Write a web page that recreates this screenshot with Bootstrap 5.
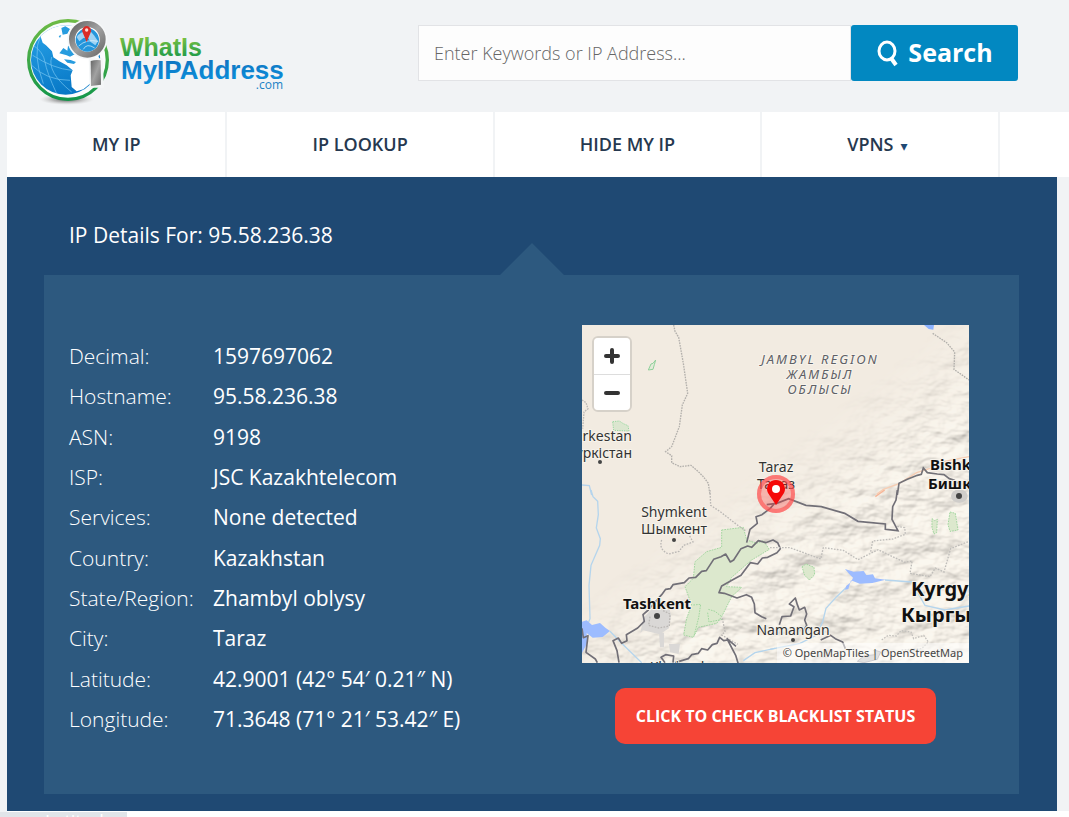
<!DOCTYPE html>
<html lang="en">
<head>
<meta charset="utf-8">
<meta name="viewport" content="width=device-width, initial-scale=1">
<title>IP Details For: 95.58.236.38</title>
<link href="https://cdn.jsdelivr.net/npm/bootstrap@5.3.0/dist/css/bootstrap.min.css" rel="stylesheet">
<style>
  body { font-family: "Open Sans", "Noto Sans", sans-serif; background: #f1f3f5; overflow-x: hidden; min-height: 100vh; }
  .site-header { height: 112px; padding: 12px 51px 0 20px; }
  .search-form { width: 600px; margin-top: 13px; }
  .search-form .form-control { height: 56px; border: 1px solid #e2e3e6; border-radius: 0; background: #fdfdfd; padding: 0 15px; font-size: 18px; font-weight: 300; color: #444; }
  .search-form .form-control::placeholder { color: #666; opacity: 1; }
  .btn-search { width: 167px; height: 56px; background: #0288c1; color: #fff; border: 0; border-radius: 3px; font-size: 25px; font-weight: 700; padding: 0; }
  .btn-search:hover { background: #0277a9; color: #fff; }
  .site-nav { margin-left: 7px; background: #fff; height: 65px; overflow: hidden; }
  .site-nav .nav-link { padding: 0 85px; height: 65px; line-height: 65px; font-size: 18px; font-weight: 600; color: #26384f; border-right: 2px solid #f1f3f5; white-space: nowrap; }
  .site-nav .nav-link:last-child { padding-right: 91px; }
  .caret-mark { font-family: "DejaVu Sans", sans-serif; font-size: 14px; color: #1f4973; margin-left: 7px; }
  .details { margin: 0 12px 0 7px; background: #1f4973; color: #fff; padding: 0 38px 17px 37px; }
  .details h1 { font-size: 21px; font-weight: 400; line-height: 30px; margin: 0; padding: 43px 25px 25px; }
  .panel { position: relative; background: #2d597f; padding: 50px 50px 50px 25px; }
  .panel::before { content: ""; position: absolute; left: 50%; bottom: 100%; margin-left: -32px; border: 32px solid transparent; border-top: 0; border-bottom-color: #2d597f; }
  .facts { display: grid; grid-template-columns: 144px 1fr; grid-auto-rows: 1fr; height: 403px; margin: 11px 0 0; align-items: center; font-size: 21px; line-height: 30px; white-space: nowrap; }
  .facts dt { font-weight: 300; }
  .facts dd { font-weight: 400; margin: 0; }
  .map-col { width: 387px; }
  .map-box { position: relative; overflow: hidden; background: #f2ebe1; }
  .map-box > svg { display: block; width: 100%; }
  .map-zoom { position: absolute; left: 10px; top: 11px; width: 40px; border: 2px solid #d6d1c9; border-radius: 6px; overflow: hidden; }
  .map-zoom button { display: block; width: 100%; height: 36px; border: 0; background: #fff; padding: 0; }
  .map-zoom button + button { border-top: 1px solid #ddd; }
  .map-zoom svg { display: block; margin: auto; }
  .map-credit { position: absolute; right: 0; bottom: 0; background: rgba(255,255,255,.5); font-family: "Noto Sans", sans-serif; font-size: 11px; line-height: 20px; padding: 0 6px; color: #444; white-space: nowrap; }
  .map-credit a { color: #444; text-decoration: none; }
  .btn-status { background: #f64436; color: #fff; border: 0; border-radius: 10px; width: 321px; height: 56px; font-size: 16px; font-weight: 700; margin-top: 25px; }
  .btn-status:hover { background: #dd3a2d; color: #fff; }
  .below { background: #fff; margin-left: 7px; min-height: 6px; }
  .link-status { position: fixed; left: 0; bottom: 0; width: 127px; height: 5px; overflow: hidden; background: #e1e5e9; color: #fff; font-size: 18px; line-height: 18px; padding-left: 45px; white-space: nowrap; }
</style>
</head>
<body>
<header class="site-header d-flex justify-content-between align-items-start">
  <a href="#" aria-label="WhatIsMyIPAddress.com">
    <svg class="d-block" width="270" height="98" viewBox="0 0 270 98">
      <defs>
        <linearGradient id="ring" x1="0" y1="0" x2="0" y2="1"><stop offset="0" stop-color="#6dbb46"/><stop offset="1" stop-color="#12964a"/></linearGradient>
        <linearGradient id="green" x1="0" y1="0" x2="0" y2="1"><stop offset="0.15" stop-color="#7cc242"/><stop offset="0.9" stop-color="#18984a"/></linearGradient>
        <linearGradient id="blue" x1="0" y1="0" x2="0" y2="1"><stop offset="0.1" stop-color="#1173bf"/><stop offset="0.9" stop-color="#0a90dc"/></linearGradient>
        <linearGradient id="sea" x1="0" y1="0" x2="0.3" y2="1"><stop offset="0" stop-color="#2aa5ea"/><stop offset="1" stop-color="#0878c6"/></linearGradient>
        <linearGradient id="steel" x1="0" y1="0" x2="1" y2="1"><stop offset="0" stop-color="#666"/><stop offset="0.5" stop-color="#a2a2a2"/><stop offset="1" stop-color="#6c6c6c"/></linearGradient>
        <radialGradient id="shade"><stop offset="0" stop-color="#555"/><stop offset="0.5" stop-color="#999" stop-opacity=".7"/><stop offset="1" stop-color="#ccc" stop-opacity="0"/></radialGradient>
        <clipPath id="ball"><circle cx="137" cy="144" r="104"/></clipPath>
      </defs>
      <g transform="scale(.33333)">
        <ellipse cx="140" cy="262" rx="82" ry="17" fill="url(#shade)"/>
        <circle cx="144" cy="144" r="118" fill="#fafcfd" stroke="url(#ring)" stroke-width="10"/>
        <g clip-path="url(#ball)">
          <rect x="30" y="30" width="220" height="225" fill="url(#sea)"/>
          <path d="M60 68L95 42 150 36 210 60 238 140 240 210 210 215 190 232 170 238 155 225 152 190 158 175 140 160 118 148 100 136 96 118 78 100 68 92Z" fill="#fff"/>
          <path d="M124 48l12-5 14 8-8 14-14 3zM116 72l8-3-4 9zM118 124l12-16 12 8 2-14 10-2 8 14 8 10-20 10-10-4zM132 142l20 2 16 6-6 6-20-4zM145 30l30 3-14 10zM210 220l20-10-26 42-34 4 20-22z" fill="#279cdf"/>
          <path d="M40 100Q70 120 75 150T110 245M35 160Q80 205 150 205M62 70Q36 125 70 215M95 135Q80 180 155 240M38 130Q100 170 155 175" fill="none" stroke="#7cc8f3" stroke-width="2"/>
        </g>
        <circle cx="202" cy="82" r="60" fill="#f6f8f9"/>
        <circle cx="202" cy="82" r="46" fill="#fff" stroke="url(#steel)" stroke-width="18"/>
        <circle cx="202" cy="84" r="35" fill="#2496dc"/>
        <path d="M170 76Q180 56 210 56L222 70 234 88 226 100 212 90 204 78 190 78 178 88Z" fill="#9fd3f3"/>
        <path d="M176 102Q200 80 234 88M190 112Q200 92 224 108" stroke="#e8f6fd" stroke-width="2" fill="none"/>
        <path d="M200 90L189 64A13 14 0 1 1 211 64Z" fill="#db2b27"/><circle cx="200" cy="54" r="5" fill="#ffd9d3"/>
        <path d="M206 139h42l4 88h-43z" fill="#f4f6f7"/>
        <path d="M212 147Q228 142 242 145L243 218 213 222Z" fill="url(#steel)"/>
      </g>
      <g font-family="'Liberation Sans', sans-serif" font-weight="700">
        <text x="100" y="44" font-size="25" fill="url(#green)">WhatIs</text>
        <text x="101" y="67" font-size="26" fill="url(#blue)">MyIPAddress</text>
      </g>
      <text x="263" y="77" text-anchor="end" font-family="'Open Sans', sans-serif" font-size="12" fill="#1b82c6">.com</text>
    </svg>
  </a>
  <form class="search-form d-flex" role="search">
    <label class="visually-hidden" for="q">Search</label>
    <input id="q" class="form-control flex-grow-1" type="text" placeholder="Enter Keywords or IP Address...">
    <button class="btn btn-search flex-shrink-0 d-flex align-items-center justify-content-center" type="button">
      <svg class="me-2" width="24" height="28" viewBox="0 0 24 28" fill="none" stroke="#fff" aria-hidden="true"><ellipse cx="11" cy="12" rx="8" ry="9" stroke-width="3"/><path d="M15 19l5 7" stroke-width="4"/></svg>Search
    </button>
  </form>
</header>

<nav class="site-nav">
  <div class="nav flex-nowrap">
    <a class="nav-link" href="#">MY IP</a>
    <a class="nav-link" href="#">IP LOOKUP</a>
    <a class="nav-link" href="#">HIDE MY IP</a>
    <a class="nav-link" href="#">VPNS<span class="caret-mark">▾</span></a>
  </div>
</nav>

<main class="details">
  <h1>IP Details For: 95.58.236.38</h1>
  <section class="panel d-flex justify-content-between align-items-start">
    <dl class="facts">
      <dt>Decimal:</dt><dd>1597697062</dd>
      <dt>Hostname:</dt><dd>95.58.236.38</dd>
      <dt>ASN:</dt><dd>9198</dd>
      <dt>ISP:</dt><dd>JSC Kazakhtelecom</dd>
      <dt>Services:</dt><dd>None detected</dd>
      <dt>Country:</dt><dd>Kazakhstan</dd>
      <dt>State/Region:</dt><dd>Zhambyl oblysy</dd>
      <dt>City:</dt><dd>Taraz</dd>
      <dt>Latitude:</dt><dd>42.9001 (42° 54′ 0.21″ N)</dd>
      <dt>Longitude:</dt><dd>71.3648 (71° 21′ 53.42″ E)</dd>
    </dl>
    <div class="map-col text-center">
      <div class="map-box">
        <svg viewBox="0 0 387 338" role="img" aria-label="Map of the area around Taraz">
          <defs>
            <filter id="relief" x="0" y="0" width="100%" height="100%">
              <feTurbulence type="fractalNoise" baseFrequency="0.025 0.04" numOctaves="4" seed="8"/>
              <feDiffuseLighting surfaceScale="7" diffuseConstant="1.16" lighting-color="#f5f2ea"><feDistantLight azimuth="235" elevation="60"/></feDiffuseLighting>
            </filter>
            <linearGradient id="fade" gradientUnits="userSpaceOnUse" x1="150" y1="130" x2="250" y2="260"><stop offset="0.15" stop-color="#000"/><stop offset="0.75" stop-color="#999"/></linearGradient>
            <mask id="hills"><rect width="387" height="338" fill="url(#fade)"/></mask>
          </defs>
          <rect width="387" height="338" fill="#f2ebe1"/>
          <g mask="url(#hills)"><rect width="387" height="338" filter="url(#relief)"/></g>

          <!-- north-west -->
          <g transform="translate(-7 -5) scale(.33333)" fill="none">
            <path d="M296 15L300 34 311 52 325 130 338 220 322 255 313 320 290 380 272 395 290 407 290 428 315 440 348 436 370 455 385 470 400 490 405 525" stroke="#b3b0ac" stroke-width="4" stroke-dasharray="5 3"/>
            <path d="M21 240l12 8 6 18-12 10-4 50" stroke="#bbb8b4" stroke-width="4" stroke-dasharray="5 3"/>
            <path d="M242 120l-8 10-6 2-8 18 14-2 4-14z" stroke="#8fd09a" stroke-width="3" fill="#e3ead8"/>
            <path d="M113 305l20-2 12 8 14 6 3 16-46-2z" stroke="#9ad8a2" stroke-width="3" fill="#dbe6cf" stroke-dasharray="4 3"/>
            <path d="M21 495l22 2 7 28" stroke="#b5d3ec" stroke-width="4"/>
          </g>
          <!-- north-east -->
          <g transform="translate(188 -5) scale(.33333)" fill="none">
            <path d="M462 15h30l-2 14-14-2z" fill="#8cb2ff"/>
            <path d="M488 40L530 68 554 96 552 148 597 180" stroke="#b0aeaa" stroke-width="4" stroke-dasharray="5 3"/>
            <path d="M320 522L340 508 385 492 440 458 480 445 520 425 597 410" stroke="#f7cdb2" stroke-width="4"/>
            <path d="M382 525l5-35 25-12 30-12 12-3 6-19 12 14 30 4 20 2 16 12 15 5 14 10 6 18" stroke="#737278" stroke-width="5"/>
          </g>
          <!-- south-west -->
          <g transform="translate(-7 165) scale(.33333)" fill="none">
            <path d="M440 120L505 112 515 150 545 160 565 152 583 178 530 210 495 240 470 262 455 290 500 292 470 320 440 380 425 400 370 412 355 442 326 435 335 385 350 345 330 290 355 265 360 215 395 185 440 172Z" fill="#dce8cd" stroke="#a3d6a0" stroke-width="3" stroke-dasharray="5 3"/>
            <path d="M355 345l22-2-6 40-14 55M400 358l20 6 20 16M398 368l4 28 40-8" stroke="#a3d6a0" stroke-width="3" stroke-dasharray="5 3"/>
            <path d="M48 0l6 20 14 14 2 40-6 40 12 32-2 20-26 60-6 60 3 100-8 20" stroke="#b5d5ed" stroke-width="4"/>
            <path d="M21 395l14-4 16 14 24-6 16 14 14 10-22 18-30 2-18-14 2 30-16 30z" fill="#9dbcff"/>
            <path d="M105 424L140 460 200 518M505 512L540 488 600 475" stroke="#b5d5ed" stroke-width="4"/>
            <path d="M205 385l25-28 30-22 20 2 8 40-6 38-28 18-50-12-8 8zM252 428h15v44h-12zM282 462h33l-4 30-26-5z" fill="#dad8d6"/>
            <path d="M260 150q-10 30 22 42l30-8 14-18 28-10-10-18M225 380l-4 26 30 8 32-6 2-36-24-12M405 0l2 46 30 20 46 36 28 20M442 385l8 40-10 10 48 28" stroke="#bbb8b5" stroke-width="4" stroke-dasharray="5 4"/>
            <path d="M21 415l4 28 14-6-6 50 28 20 6 11M132 518l-6-36-12-30 16-8 10 16 16-8-2-18 34-20 20-20-4-20 16-14 40-46 12-16 14-2 8-12 34-6 14-14 20-2 18-18 14-2 22-34 22-8 14-8 14 24 10-6 22-34 20-8 12 4 20-20 22 6 22-8 14 8 8 18-10 12-28 14-16 2-14 18-22-4-28 38-22 12-36 20-8 20 16 2 38 14 28-10 16 8 8 20 2 26 20 12 14 6M515 158l10-40 22-18-4-20 18-6 24-18 12-14M300 518l40-12 10-12 20-4 10-14 18 4 14-16 14-4 8-18 12 10 12-2 24 46 8 26M270 518l-12-16 14-8 24 4-2 20M455 445l28 24" stroke="#716f77" stroke-width="5" stroke-linejoin="round"/>
          </g>
          <!-- south-east -->
          <g transform="translate(188 165) scale(.33333)" fill="none">
            <path d="M382 0l-4 30-10 20-2 38 18 34-38-4v-16l-82-8-40-24-70-20-46-4-52-20-36 14-30 4" stroke="#716f77" stroke-width="5"/>
            <path d="M0 173h60l92 34 8-34 60 8 44 28 60-30 80 38 22-4M302 185l6-32 60-6 38-14-2-20-24-4M426 215l-6 35 60 10 16-26 26 12 20-70 55-22" stroke="#bfbdba" stroke-width="4" stroke-dasharray="5 4"/>
            <path d="M316 20l28-20" stroke="#f7b596" stroke-width="4"/>
            <path d="M486 86l8 6 8-4-2 40-8 4-6-20zM540 66l16 4 8 50-24 4-6-20zM96 230l12-8 24 10 2 22-16 16-14-14z" fill="#dce8cd" stroke="#a3d6a0" stroke-width="3" stroke-dasharray="5 3"/>
            <path d="M228 293L200 320 168 355 158 395 140 435 90 460 0 478M345 270l80 6 40 70 60 14 72-12" stroke="#b5d5ed" stroke-width="4"/>
            <path d="M225 237l26 8 30-2 8 12 20-2 6 12 32 4-40 10-38 2-26-10-8 26-10 2 4-12 14-10 6-14-12-12z" fill="#9dbcff"/>
            <path d="M28 404l8-24 26-2 10-28-14-8 18-18 6 20 6 16 16-8 6 20-6 18 6 16-12 20M152 450l30-14 14 10 22 10 8 20" stroke="#716f77" stroke-width="5" stroke-linejoin="round"/>
            <path d="M335 450l20-14 24 2 14-16 30 4 8 20 30-10 14 20-20 20-60 4" stroke="#c4c2be" stroke-width="4" stroke-dasharray="5 4"/>
            <path d="M262 514l20-16 34-4-4-14 20 6-10 22-40 10z" fill="#c5c3c0" stroke="#9a98a0" stroke-width="3"/>
            <ellipse cx="568" cy="18" rx="25" ry="20" fill="#cfcdca"/>
          </g>

          <g fill="#444"><circle cx="18" cy="137" r="2"/><circle cx="92" cy="215" r="2"/><circle cx="75" cy="291" r="3"/><circle cx="377" cy="171" r="3"/><circle cx="211" cy="315" r="2"/></g>
          <g font-family="'Noto Sans', sans-serif" fill="#333" stroke="#f7f3eb" stroke-width="2" paint-order="stroke" font-size="14">
            <g font-style="italic" font-size="13" letter-spacing="2" text-anchor="middle" fill="#5e6066">
              <text x="238" y="39">JAMBYL REGION</text><text x="238" y="54">ЖАМБЫЛ</text><text x="238" y="69">ОБЛЫСЫ</text>
            </g>
            <text x="50" y="116" text-anchor="end">Turkestan</text><text x="50" y="133" text-anchor="end">Түркістан</text>
            <g text-anchor="middle">
              <text x="194" y="147">Taraz</text><text x="194" y="164">Тараз</text>
              <text x="92" y="192">Shymkent</text><text x="92" y="209">Шымкент</text>
              <text x="211" y="310">Namangan</text><text x="95" y="347">Khujand</text>
            </g>
            <g font-weight="700" font-size="15" fill="#111">
              <text x="75" y="284" text-anchor="middle">Tashkent</text>
              <text x="348" y="145">Bishkek</text><text x="346" y="164">Бишкек</text>
              <g font-size="20"><text x="329" y="271">Kyrgyzstan</text><text x="319" y="297">Кыргызстан</text></g>
            </g>
          </g>
          <circle cx="194" cy="169" r="19" fill="#f33" fill-opacity=".3"/>
          <circle cx="194" cy="169" r="17" fill="none" stroke="#ff5050" stroke-opacity=".6" stroke-width="4"/>
          <path d="M194 180L186 168A9 9 0 1 1 202 168Z" fill="#f50808"/><circle cx="194" cy="164" r="4" fill="#fff"/>
        </svg>
        <div class="map-zoom">
          <button type="button" aria-label="Zoom in"><svg width="16" height="16" viewBox="0 0 16 16"><path d="M2 8h12M8 2v12" stroke="#333" stroke-width="4" stroke-linecap="round"/></svg></button>
          <button type="button" aria-label="Zoom out"><svg width="16" height="16" viewBox="0 0 16 16"><path d="M2 8h12" stroke="#333" stroke-width="4" stroke-linecap="round"/></svg></button>
        </div>
        <div class="map-credit"><a href="#">© OpenMapTiles</a> | <a href="#">OpenStreetMap</a></div>
      </div>
      <button class="btn btn-status" type="button">CLICK TO CHECK BLACKLIST STATUS</button>
    </div>
  </section>
</main>
<div class="below"></div>
<div class="link-status">Latitude a</div>
<script src="https://cdn.jsdelivr.net/npm/bootstrap@5.3.0/dist/js/bootstrap.bundle.min.js"></script>
</body>
</html>
